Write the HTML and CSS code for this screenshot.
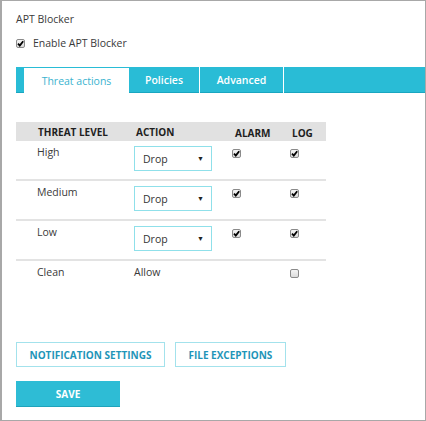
FILE: index.html
```html
<!DOCTYPE html>
<html>
<head>
<meta charset="utf-8">
<link rel="stylesheet" href="styles.css">
</head>
<body>
<div class="frame">
  <div class="title">APT Blocker</div>
  <div class="enable">
    <span class="cb checked"><svg viewBox="0 0 9 9"><path d="M2 4.6 L3.8 6.6 L7.2 2.2" /></svg></span>
    <span>Enable APT Blocker</span>
  </div>
  <div class="tabs">
    <div class="tab-lead"></div>
    <div class="tab active">Threat actions</div>
    <div class="tab">Policies</div>
    <div class="tab adv">Advanced</div>
    <div class="tab-fill"></div>
  </div>

  <div class="table">
    <div class="row head">
      <div class="c1">THREAT LEVEL</div>
      <div class="c2">ACTION</div>
      <div class="c3">ALARM</div>
      <div class="c4">LOG</div>
    </div>
    <div class="row">
      <div class="c1">High</div>
      <div class="c2"><div class="select"><span>Drop</span><span class="arrow">▼</span></div></div>
      <div class="c3"><span class="cb checked"><svg viewBox="0 0 9 9"><path d="M2 4.6 L3.8 6.6 L7.2 2.2" /></svg></span></div>
      <div class="c4"><span class="cb checked"><svg viewBox="0 0 9 9"><path d="M2 4.6 L3.8 6.6 L7.2 2.2" /></svg></span></div>
    </div>
    <div class="row">
      <div class="c1">Medium</div>
      <div class="c2"><div class="select"><span>Drop</span><span class="arrow">▼</span></div></div>
      <div class="c3"><span class="cb checked"><svg viewBox="0 0 9 9"><path d="M2 4.6 L3.8 6.6 L7.2 2.2" /></svg></span></div>
      <div class="c4"><span class="cb checked"><svg viewBox="0 0 9 9"><path d="M2 4.6 L3.8 6.6 L7.2 2.2" /></svg></span></div>
    </div>
    <div class="row">
      <div class="c1">Low</div>
      <div class="c2"><div class="select"><span>Drop</span><span class="arrow">▼</span></div></div>
      <div class="c3"><span class="cb checked"><svg viewBox="0 0 9 9"><path d="M2 4.6 L3.8 6.6 L7.2 2.2" /></svg></span></div>
      <div class="c4"><span class="cb checked"><svg viewBox="0 0 9 9"><path d="M2 4.6 L3.8 6.6 L7.2 2.2" /></svg></span></div>
    </div>
    <div class="row last">
      <div class="c1">Clean</div>
      <div class="c2">Allow</div>
      <div class="c3"></div>
      <div class="c4"><span class="cb"></span></div>
    </div>
  </div>

  <div class="buttons">
    <div class="btn">NOTIFICATION SETTINGS</div>
    <div class="btn">FILE EXCEPTIONS</div>
  </div>
  <div class="save">SAVE</div>
</div>
</body>
</html>
```

FILE: styles.css
```css
html, body {
  margin: 0;
  padding: 0;
  background: #fff;
}
.frame {
  width: 426px;
  height: 421px;
  box-sizing: border-box;
  border: 1px solid #a8a8a8;
  border-left-width: 2px;
  padding: 11px 0 0 14px;
  font-family: "Open Sans", "Liberation Sans", sans-serif;
  font-size: 10.5px;
  color: #3a3a3a;
  display: flex;
  flex-direction: column;
}
.frame > * {
  flex-shrink: 0;
}
.title {
  line-height: 14px;
}
.enable {
  margin-top: 10px;
  height: 14px;
  display: flex;
  align-items: center;
  gap: 8px;
}
.cb {
  display: inline-block;
  width: 9px;
  height: 9px;
  box-sizing: border-box;
  border: 1px solid #8a8a8a;
  border-radius: 2px;
  background: linear-gradient(#f4f4f4, #dcdcdc);
  position: relative;
}
.cb svg {
  position: absolute;
  left: -1px;
  top: -1px;
  width: 9px;
  height: 9px;
  fill: none;
  stroke: #000;
  stroke-width: 1.8;
}
.tabs {
  margin-top: 17px;
  height: 26px;
  display: flex;
}
.tab-lead {
  width: 8px;
  background: #29bcd6;
  border-bottom: 1px solid #1aa6c0;
}
.tab {
  width: 70px;
  background: #29bcd6;
  border-bottom: 1px solid #1aa6c0;
  color: #fff;
  font-weight: 600;
  display: flex;
  align-items: center;
  justify-content: center;
  margin-right: 1px;
  font-size: 10.5px;
}
.tab.active {
  width: 105px;
  background: #fff;
  color: #39b3cf;
  font-weight: 400;
  border-top: 1px solid #29bcd6;
  border-bottom: none;
  margin-right: 0;
}
.tab.adv {
  width: 83px;
}
.tab-fill {
  flex: 1;
  background: #29bcd6;
  border-bottom: 1px solid #1aa6c0;
}
.table {
  margin-top: 29px;
  width: 310px;
  display: flex;
  flex-direction: column;
}
.row {
  display: grid;
  grid-template-columns: 118px 98px 58px 36px;
  height: 40px;
  box-sizing: border-box;
  border-bottom: 2px solid #e3e3e3;
  padding-top: 4px;
  line-height: 14px;
}
.row.last {
  border-bottom: none;
  height: 27px;
}
.row.head {
  height: 19px;
  padding-top: 0;
  background: #e1e1e1;
  border-bottom: none;
  align-items: center;
  font-weight: 700;
  color: #1e1e1e;
  font-size: 10px;
}
.row .c1 { padding-left: 21px; }
.row.head .c1 { padding-left: 22px; }
.row.head .c2 { padding-left: 2px; }
.row.head .c3 { padding-left: 3px; }
.row.head .c4 { padding-left: 2px; }
.row .c3, .row .c4 {
  padding-top: 2px;
}
.select {
  margin-top: 1px;
  width: 78px;
  height: 25px;
  box-sizing: border-box;
  border: 1px solid #8fe0ea;
  display: flex;
  align-items: center;
  justify-content: space-between;
  padding: 0 7px 0 8px;
  color: #333;
}
.arrow {
  font-size: 7px;
  color: #222;
}
.buttons {
  margin-top: 54px;
  display: flex;
  gap: 10px;
}
.btn {
  height: 25px;
  box-sizing: border-box;
  border: 1px solid #a3e2ec;
  color: #1f95b8;
  font-weight: 700;
  font-size: 10px;
  display: flex;
  align-items: center;
  padding: 0 12.5px;
}
.save {
  margin-top: 14px;
  width: 104px;
  height: 26px;
  background: #2ebcd5;
  border-bottom: 1px solid #1fa3bb;
  box-sizing: border-box;
  color: #fff;
  font-weight: 700;
  font-size: 10px;
  display: flex;
  align-items: center;
  justify-content: center;
}
```
